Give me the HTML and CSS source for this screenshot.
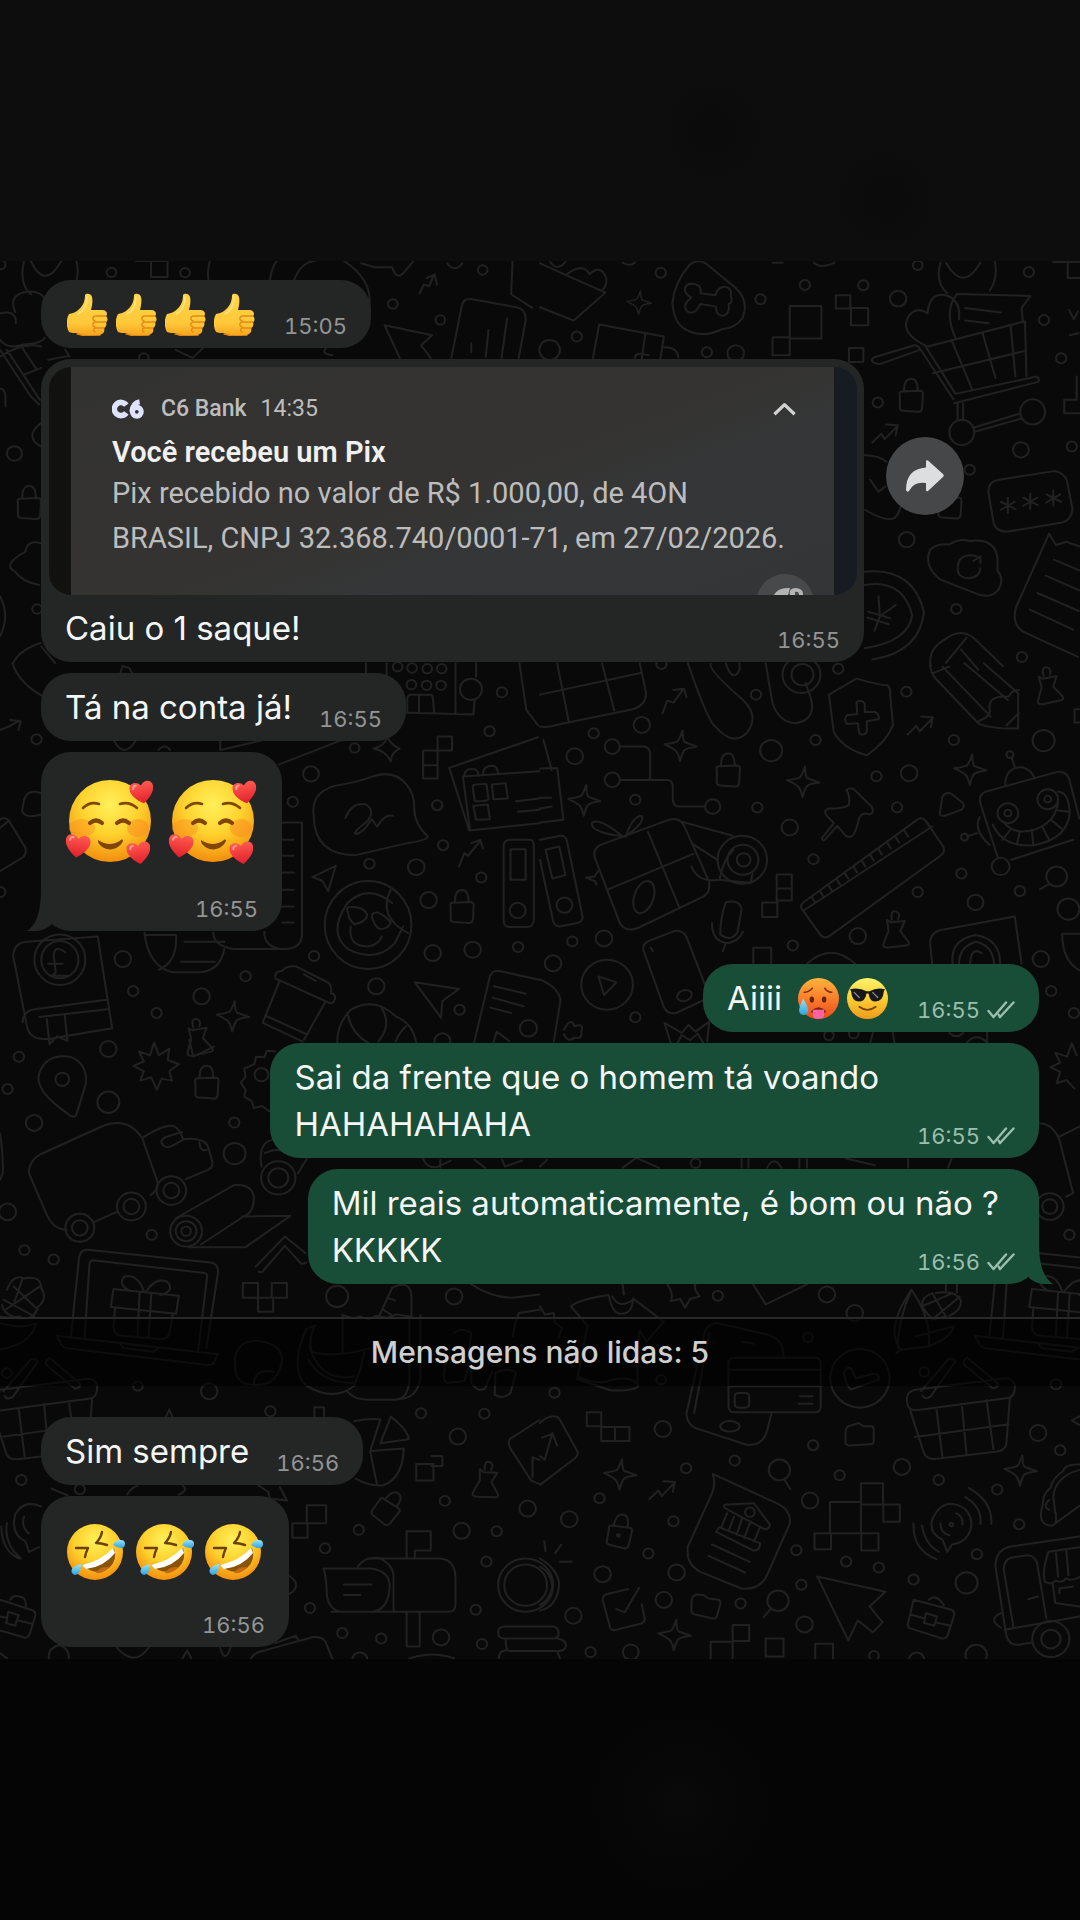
FILE: index.html
```html
<!DOCTYPE html>
<html lang="pt-BR">
<head>
<meta charset="utf-8">
<meta name="viewport" content="width=device-width, initial-scale=1">
<title>Conversa</title>
<link rel="stylesheet" href="styles.css">
</head>
<body>

<!-- Shared emoji and icon symbols -->
<svg class="defs" aria-hidden="true">
  <defs>
    <radialGradient id="face" cx=".5" cy=".3" r=".72">
      <stop offset="0" stop-color="#fff05a"/><stop offset=".5" stop-color="#ffd22e"/><stop offset="1" stop-color="#f28a0c"/>
    </radialGradient>
    <linearGradient id="hot" x1="0" y1="0" x2="0" y2="1">
      <stop offset="0" stop-color="#ffb43c"/><stop offset=".5" stop-color="#fa7e2c"/><stop offset="1" stop-color="#ea4a1c"/>
    </linearGradient>
    <linearGradient id="cool" x1="0" y1="0" x2="0" y2="1">
      <stop offset="0" stop-color="#fdf26c"/><stop offset=".5" stop-color="#fccf35"/><stop offset="1" stop-color="#f09a1a"/>
    </linearGradient>
    <linearGradient id="hand" x1="0" y1="0" x2="0" y2="1">
      <stop offset="0" stop-color="#ffd54a"/><stop offset=".7" stop-color="#ffc83a"/><stop offset="1" stop-color="#f5a31c"/>
    </linearGradient>
    <linearGradient id="heartfill" x1="0" y1="0" x2="0" y2="1">
      <stop offset="0" stop-color="#ff5a50"/><stop offset="1" stop-color="#e0202c"/>
    </linearGradient>
    <linearGradient id="tear" x1="0" y1="0" x2="0" y2="1">
      <stop offset="0" stop-color="#9be4fb"/><stop offset="1" stop-color="#2fa3dc"/>
    </linearGradient>

    <symbol id="thumb" viewBox="0 0 41 43">
      <path fill="url(#hand)" d="M18 2c1-2 6-2 7 2 1 4 0 9-1 13h11c5 0 6 4 4 6 2 2 2 5 0 6 1 3 0 5-2 6 1 3 0 6-4 7-6 1-13 1-18 0-2 0-3-1-5-2-3 0-6 0-8-1-3-5-3-13 0-18 3-1 5-1 8-3 5-4 8-8 8-16z"/>
      <path fill="none" stroke="#e28a14" stroke-width="1.4" stroke-linecap="round" d="M28 23c-3 1-3 4 0 5M28 29c-3 1-3 4 0 5M28 35c-2 1-2 3 0 4M29 23h10M29 29h10M29 35h8M10 41c3 0 6 2 9 2h14"/>
      <path fill="none" stroke="#ffe587" stroke-width="1.5" stroke-linecap="round" d="M20 4c0 8-3 14-9 17"/>
    </symbol>

    <symbol id="heart" viewBox="0 0 24 24">
      <path fill="url(#heartfill)" d="M12 23C6 19 0 13 0 7c0-6 8-8 12-2 4-6 12-4 12 2 0 6-6 12-12 16z"/>
      <path fill="none" stroke="#ff9a90" stroke-width="2" stroke-linecap="round" d="M4 7c0-2 1-3 3-3"/>
    </symbol>

    <symbol id="love" viewBox="0 0 90 85">
      <circle cx="45" cy="42" r="41" fill="url(#face)"/>
      <ellipse cx="17" cy="49" rx="13" ry="9" fill="#f98a1e" opacity=".4"/>
      <ellipse cx="73" cy="49" rx="11" ry="9" fill="#f98a1e" opacity=".5"/>
      <g fill="none" stroke="#814506" stroke-linecap="round">
        <path stroke-width="2.6" d="M18 29q7-7 16-4M55 25q9-3 17 4"/>
        <path stroke-width="4.2" d="M25 44q6-5 12 0M52 44q6-5 12 0"/>
      </g>
      <path fill="#814506" d="M33 61q12 8 23 0c1-1 2 0 2 1-5 11-20 11-25 1 0-1 0-2 0-2z"/>
      <use href="#heart" x="0" y="54" width="25" height="26" transform="rotate(8 12 67)"/>
      <use href="#heart" x="62" y="62" width="24" height="24" transform="rotate(-8 74 74)"/>
      <use href="#heart" x="65" y="1" width="24" height="25" transform="rotate(-10 77 13)"/>
    </symbol>

    <symbol id="hotface" viewBox="0 0 40 40">
      <circle cx="20" cy="20" r="20" fill="url(#hot)"/>
      <g fill="none" stroke="#7d2c08" stroke-width="1.5" stroke-linecap="round"><path d="M6 14q4 0 8-4M26 10q3 4 7 4"/></g>
      <ellipse cx="13.500" cy="21" rx="2.200" ry="3" fill="#67240a"/>
      <ellipse cx="25.500" cy="21" rx="2.200" ry="3" fill="#67240a"/>
      <path fill="#7d2410" d="M13 32q7-7 14 0v2H13z"/>
      <path fill="#ff62a4" d="M14.500 31h11v5q0 4-5.500 4t-5.500-4z"/>
      <path fill="url(#tear)" d="M5 20q5 9 5 11a4.500 4.500 0 0 1-9 1q0-3 4-12z"/>
    </symbol>

    <symbol id="coolface" viewBox="0 0 40 40">
      <circle cx="20" cy="20" r="20" fill="url(#cool)"/>
      <path fill="#17181a" d="M3 11q9-2 16 2h3q7-4 15-2l-1 2q-1 10-8 10-6 0-7-8h-2q-1 8-8 8-6 0-7-10z"/>
      <path fill="none" stroke="#8b8d92" stroke-width="1.200" stroke-linecap="round" d="M7 14l5 5M25 14l5 5"/>
      <path fill="none" stroke="#7a4208" stroke-width="1.700" stroke-linecap="round" d="M12 28q8 6 16 0"/>
    </symbol>

    <symbol id="rofl" viewBox="0 0 58 57">
      <circle cx="28" cy="29" r="28" fill="url(#face)"/>
      <g fill="none" stroke="#6e4004" stroke-width="2.400" stroke-linecap="round" stroke-linejoin="round">
        <path d="M9 25l12 0q-2 4-3 9M35 9q-1 6-6 11 5 0 11 2"/>
      </g>
      <path fill="#8a5408" d="M15 42q20-3 32-17 4 12-5 20-13 9-27-3z"/>
      <path fill="#fff" d="M15 42q19-4 31-17l2 5Q37 44 19 46z"/>
      <path fill="#c46a16" d="M29 50q4-7 13-6-5 7-13 6z"/>
      <path fill="url(#tear)" d="M46 22q3-6 8-5a3.800 3.800 0 0 1 0 8q-4 0-8-3z"/>
      <path fill="url(#tear)" d="M14 41q0 11-6 11a4 4 0 0 1-3-6q3-4 9-5z"/>
    </symbol>

    <symbol id="ticks" viewBox="0 0 28 18">
      <path fill="none" stroke="currentColor" stroke-width="2.400" stroke-linecap="round" stroke-linejoin="round" d="M1.500 10l5 6L19 1.500M13 16L26.500 1.500"/>
      <path fill="none" stroke="currentColor" stroke-width="2.400" stroke-linecap="round" d="M11.500 13.500l1.500 2.500"/>
    </symbol>

    <!-- Small wallpaper ornaments, centred on 0,0 -->
    <g id="star"><path d="M-4-44q6 32 12 34 12 2 36 8-30 8-36 18-4 12-6 32-10-26-18-30-10-6-34-14 28-8 36-14 6-10 10-34z" transform="rotate(8)"/></g>
    <g id="lock"><path d="M-32-12q-4-10 6-11l52-2q10 0 9 10l-2 42q-2 12-12 11l-44-3q-10-2-9-12zM-20-24q0-36 20-37t20 35"/></g>
    <g id="trend"><path d="M-44 28l26-26 10 16L26-18M-4-26l34 2-6 30"/></g>
    <g id="pin"><path d="M-36-24l8 32-10 38q-4 16 16 12l52-12q10-4 0-14L6 6l10-32-40 8zM-22-26q-8-28 8-26t10 22"/></g>
    <g id="book"><path d="M-136-120q4-40 40-42l206-16 42 276-186 32q-56 4-62-40zM-108 80q0-36 40-40l204-28M-60 64l204-24M-38 70l8 76 22-24 30 14-8-80"/><ellipse cy="-108" rx="74" ry="76"/><ellipse cy="-108" rx="54" ry="56"/><path d="M16-130q-30-24-34 8l6 52q-6 10-16 10h52M-34-96h42"/></g>
    <g id="laptop"><path d="M-190 90L-166-150q4-24 26-22L214-134q26 4 24 28l-34 230M-150 92l14-220q0-14 16-12L200-102q8 4 6 12l-26 222M-232 86l470 56-12 24q-4 10-20 8L-200 124q-16-4-20-16zM-46 112l10 12 86 10 14-10"/><path d="M-66-54l190 20-8 54-190-20zM-62 6l-4 54q2 24 24 26l112 10q26 0 28-24l8-50M10-46L4 84M44-42l-8 132M22-48q-18-52-56-44-22 24 18 44M28-46q30-46 62-30 24 28-20 40"/></g>
    <g id="basket"><path d="M-150-40q-8-36 24-42l262-34q30 2 26 34-2 24-24 26l-262 36q-24 0-26-20zM-142-20l40 128q8 20 32 18l182-22q24-4 26-26l10-136M-66-28l18 150M8-40l14 152M80-50l20 146M-128 60l272-38M-110-78l80-96q14-4 20 6l-72 106q-18 12-24-2M24-178l88 76q4 14-14 16L16-156q-8-12 8-22"/></g>
    <g id="cart"><path d="M-170-10l116-36q14 0 16 14l-114 42q-24 2-26-14zM-40-40L60 116M-22-44L66 100l236-52q10 6 4 16L62 128M-14-42L268-118l4 164M0 38l264-66M54-62l60 148M144-84l38 136M226-106l14 154M72 130v52M88 128v52M118 202l132-42M122 214l136-40"/><ellipse cx="84" cy="216" rx="36" ry="38"/><ellipse cx="290" cy="154" rx="36" ry="38"/><path d="M-20-44q-80-40-50-90 24-30 54-8 8-70 60-52 38 16 32 70M66-68q-36-80 4-132l214 6-26 36 4 44M94-158l104 14M94-120l68 8"/></g>
  </defs>
</svg>

<div class="backdrop backdrop--top"></div>

<main class="chat">
  <svg class="wallpaper" viewBox="0 0 1080 1398" preserveAspectRatio="xMidYMin slice" aria-hidden="true">
    <!-- top left -->
    <g transform="translate(0 -11) scale(.344 .333)">
      <path d="M70 33q-16 70 20 100M222 33q8 30 0 60M90 33q40 90 88 0M395 33h92v48h-48V33M610 33q-8 30-4 56M805 33q-16 20-20 56M855 90q20-54 60-57M1000 33q90 60 72 150M44 186q-20-50 30-60 40-6 56 20M0 190q40-10 46 20v10M0 270q20 30 70 14 50-4 60-20M1050 40l40 12h50q14 40 34 16l26-32M1300 40q20 30 44 0M1490 33l-4 100 60 40M1220 130l12-26 16 4 14-34M1240 84l24-10 6 30M1118 226l138 30-32 30 28 38M1118 226l44 98M1312 324l30-154q4-26 30-22l130 24q28 6 26 40l-20 112M1370 280v26M1420 240l-8 80M1474 206l-16 118M0 300l90 140 24 24M20 300l96 150M0 320q70-46 120-30M60 286l46 72M70 374l50-20M140 330l60-12M190 300l12 20M510 300l50 24 30-30M0 416q16 0 16 30v24M118 520q-48 40 0 70M118 880q-40-10-44 26-70 40-30 60 20 30 70 40M0 1040q30 60 0 120M118 1180q-60 20-80 60M160 1240l-40-50M950 292q-20 20 16 24"/>
      <circle cx="324" cy="67" r="14"/><circle cx="538" cy="68" r="14"/><circle cx="1403" cy="60" r="14"/><circle cx="1142" cy="162" r="14"/><circle cx="1280" cy="210" r="14"/><circle cx="42" cy="611" r="22"/><circle cx="418" cy="324" r="14"/><circle cx="2" cy="44" r="14"/><circle cx="108" cy="1078" r="14"/>
      <use href="#lock" x="84" y="770"/>
    </g>
    <!-- top right -->
    <g transform="translate(540 -11) scale(.344 .333)">
      <path d="M0 40l190 88-92 84L0 172M30 36q20 30 44 0M74 76q50-40 70-4 34-30 48 12 4 20-10 36M240 38q20 12 36 0M154 324l18-100 188 36-10 66M306 252l-10 74M276 324q0-20 40-8M360 292q40 0 42 30"/>
      <path d="M385 160q4-60 50-116 26-20 52 0l82 70q40 40 20 90-20 30-60 34-60 30-110-2-30-20-34-76z"/>
      <path d="M440 142q-24-12-18-30 14-20 40-4 8 12 4 22l44 6q6-26 28-26 22 6 16 26 8 24-6 26 6 30-16 36-22-2-20-28l-46-8q-12 30-32 26-22-14-4-36z"/>
      <path d="M676 38h30M796 38q20 20 60 0M726 168h92v98h-92zM676 262h50v54h-50zM860 136h42v40h-42zM904 174h50v52h-50zM898 294h42v42h-42zM1164 38q-16 60 20 92M1322 33q10 50-14 88M1180 38q50 90 100 0M1534 40v44h34M1492 36h76M1538 180l14 28 12-24M1540 256l26-6M1560 380v70h-36v40h44"/>
      <use href="#star" x="290" y="156" transform="translate(70 38) scale(.76)"/>
      <circle cx="351" cy="68" r="15"/><circle cx="770" cy="105" r="15"/><circle cx="940" cy="106" r="15"/><circle cx="641" cy="148" r="15"/><circle cx="1041" cy="146" r="24"/><circle cx="107" cy="260" r="15"/><circle cx="28" cy="300" r="30"/><circle cx="485" cy="307" r="15"/><circle cx="569" cy="310" r="24"/><circle cx="1098" cy="46" r="14"/><circle cx="1421" cy="66" r="15"/><circle cx="1465" cy="210" r="15"/><circle cx="1515" cy="325" r="15"/><circle cx="982" cy="458" r="15"/><circle cx="1398" cy="600" r="23"/><circle cx="1546" cy="590" r="15"/><circle cx="1249" cy="660" r="15"/><circle cx="1066" cy="870" r="23"/><circle cx="1210" cy="1078" r="15"/><circle cx="1401" cy="1222" r="15"/>
      <use href="#cart" x="1142" y="332"/>
      <use href="#lock" x="1078" y="448"/>
      <use href="#lock" x="1190" y="768"/>
      <use href="#trend" x="1010" y="550"/>
      <path d="M944 616q40 0 64 20M960 690l24 36 20-16M944 780q60 36 84 26 14-8 20-36"/>
      <path d="M1304 730q-4-34 30-40l160-26q30 4 38 30l16 84q-4 34-30 40l-160 28q-34 0-40-30zM1360 744v46M1340 756l42 22M1340 780l40-24M1425 732v46M1405 744l42 22M1405 768l40-24M1492 722v46M1472 734l42 22M1472 758l40-24"/>
      <path d="M1190 884q30-20 60-10 70-10 80 50v40q20 20 4 54-20 30-60 16l-110-44q-50-40-30-90 20-20 56-16zM1270 920q-30-10-50 10-20 54 28 56 30-4 32-30M1260 934l20-14v20"/>
      <path d="M1480 852l20 34 30-10 38 14M1480 852l-96 220q-14 50 20 74l160 76M1494 930l74 32M1470 978l98 44M1446 1030l120 54M1424 1080l126 60"/>
      <path d="M944 966q140-14 172 120-10 120-150 144M944 1006q110-20 138 90-10 80-138 100M984 1040l4 60 46-34M988 1100l-16 44M954 1086l64 20M952 1104l62 20"/>
      <path d="M1136 1250q-10-50 40-80 50-40 90 0l80 80M1180 1240l60-76M1224 1200l50 60"/>
    </g>
    <!-- middle left -->
    <g transform="translate(0 399) scale(.344 .333)">
      <path d="M36 10q20 60 90 100M350 40l6-22 20 6 8 16M1064 10v30M1124 10v60M1324 10v150M1384 10v40M1380 120l-4 44-210-6M1184 156v-44q4-8 10-8h56q8 0 8 8l4 44M1218 106v50M640 240v30M640 270l120-28M810 314l200-80M330 240q30 60 66 0M460 270q20-20 34 0M0 210q30-10 56-28M30 180l30 4-6 26M1510 10l20 140 34 46"/>
      <g><circle cx="1156" cy="20" r="14"/><circle cx="1198" cy="24" r="14"/><circle cx="1242" cy="26" r="14"/><circle cx="1284" cy="26" r="14"/><circle cx="1196" cy="74" r="14"/><circle cx="1240" cy="76" r="14"/><circle cx="1282" cy="76" r="14"/><circle cx="1369" cy="88" r="32"/></g>
      <path d="M120 400q-40-14-50 20l-6 34q10 24 56 10M0 480q10-10 24 0l50 84q4 20-10 30L0 634M0 504l24-20"/>
      <path d="M1272 230h42v42h-42v84h-42v-84h42M1230 316h42M1272 230v42"/>
      <path d="M1564 232L1306 324l58 188 204-22M1346 352l20 156M1346 350l222-16M1350 348q0-24 30-20 10 4 12 20M1404 344q0-28 30-26 12 4 14 20M1374 380q0-6 10-6l30-2 6 46q-6 8-40 6zM1430 374l40-4 6 46-42 2zM1376 438l42-4 6 44-40 2zM1500 424l68-8M1506 456l62-6"/>
      <path d="M912 470q-10-70 60-92 60-10 100-24 70-30 110 20 24 30 22 70 0 50 40 86-4 12-60 20l-150 36q-120 0-122-116zM1004 474q20-50 60-40 30 20 0 54-40 30-30 34 20 0 46-44l16 22q24-40 46-32"/>
      <path d="M820 488h58v340q-4 40-50 40H680q-60-10-60-50M820 540h34M820 588h34M820 638h34M820 690h34M820 740h34M820 788h34M768 816q0 40 40 50M420 818q10 100 80 120h80q60-4 72-70M420 826h92q4 80-50 104M536 846h116M526 906h98M290 816"/>
      <path d="M976 618l-68 34 28 10 18 32zM1334 620l16-40 10 8 36-44M1370 550l26-10 8 26"/>
      <ellipse cx="1070" cy="796" rx="126" ry="132"/><path d="M1140 730q-70-60-130 0-60 90 4 140 80 40 134-20l24-50M1136 690q-40 80 50 130M1012 760q-10-22 14-18 30 0 40 20 6 20-34 32-18-12-20-34zM1084 780q-10-22 14-22 22 10 38 30-8 20-30 20-14-4-22-28zM1020 800q-10 60 50 60 30-4 40-30"/>
      <path d="M1464 560q0-20 20-20h56q12 0 12 20v220q-2 22-20 22h-50q-18 0-18-22zM1484 568h44v92h-44z"/><circle cx="1505" cy="752" r="23"/>
      <use href="#lock" x="1342" y="752"/>
      <use href="#book" x="174" y="1008"/>
      <path d="M800 950q0-16 20-16 10-16 40-14l96 50q10 10 6 30 14 4 12 16-4 18-16 14L800 956M812 966l-48 122M944 1030l-60 110M764 1090l116 56M776 1070l116 54M884 944l34 20"/>
      <path d="M980 1150q0-60 40-100 70-40 130 20 50 20 60 80M1010 1060q10 60 60 90M1110 1046q30 50-10 100M1180 1100q-20 20-30 46M1206 968l128 20-48 36-4 50zM1378 1150l44-190q4-30 30-26l116 26M1436 980l92 22M1432 1014l90 26M1426 1044l60 16M1434 1150l10-34 36 28"/>
      <use href="#star" x="680" y="1068"/><use href="#pin" x="584" y="1130"/>
      <path d="M1086 266q30-6 40-34 12 24 36 34-24 10-26 38-14-30-50-38z"/>
      <g><circle cx="1459" cy="97" r="15"/><circle cx="1423" cy="214" r="15"/><circle cx="1031" cy="264" r="14"/><circle cx="904" cy="342" r="23"/><circle cx="106" cy="238" r="15"/><circle cx="851" cy="426" r="15"/><circle cx="1271" cy="436" r="15"/><circle cx="1288" cy="556" r="15"/><circle cx="1074" cy="612" r="15"/><circle cx="1210" cy="622" r="24"/><circle cx="1399" cy="653" r="15"/><circle cx="1246" cy="721" r="24"/><circle cx="913" cy="889" r="15"/><circle cx="1258" cy="880" r="24"/><circle cx="1374" cy="870" r="24"/><circle cx="1506" cy="862" r="15"/><circle cx="357" cy="898" r="24"/><circle cx="714" cy="950" r="15"/><circle cx="387" cy="994" r="15"/><circle cx="586" cy="1010" r="24"/><circle cx="455" cy="1060" r="15"/><circle cx="1094" cy="980" r="24"/><circle cx="1336" cy="1050" r="15"/><circle cx="1536" cy="1106" r="25"/><circle cx="1286" cy="1144" r="23"/><circle cx="1" cy="697" r="15"/></g>
    </g>
    <!-- middle right -->
    <g transform="translate(540 399) scale(.344 .333)">
      <path d="M0 200q20 4 60-8l210-44q40-14 38-50L290 10M0 104l296-66M50 10l34 176M180 10l36 142M10 240l24 90M0 326l50-2 18 156-68 8M0 414h32M0 446l34-6M356 160l14-38 18 6 28-40M388 90l30-4 8 26"/>
      <path d="M430 10q60 180 80 190 50 60 90 20 40-50-10-100-100-90-94-108M540 10q20 60 40 20V10M656 10l20 120q20 60 70 60 60-14 40-80l-14-40"/><circle cx="760" cy="44" r="55"/><circle cx="763" cy="44" r="32"/>
      <path d="M840 104l80-48q70 20 90 20 10 10 8 30l8 90q-20 50-76 90-70-20-96-70zM920 126q14-8 24 4v26h30q14 8 10 22l-34 6v32q-10 14-22 4l-4-30-32 2q-10-14 0-26l30-4z"/>
      <use href="#trend" x="1112" y="196"/>
      <path d="M1134 10q0 30 20 50l120 130q30 16 116 16V100L1290 10M1140 40l50-20M1170 20l140 150M1234 10l126 110M1274 184q30-10 34-30-10-50 54-44 10-20 30-20M1356 196l36-36"/>
      <use href="#pin" x="1486" y="74"/><path d="M1568 148h-14v40h14"/>
      <path d="M232 260h70q18 4 18 20v78M232 360h140q14 4 14 20v40q2 20 18 20h74"/><circle cx="210" cy="260" r="22"/><circle cx="210" cy="360" r="22"/><circle cx="502" cy="440" r="22"/>
      <use href="#lock" x="546" y="342"/><use href="#star" x="412" y="256"/><use href="#star" x="768" y="364"/><use href="#star" x="1254" y="328"/><use href="#star" x="132" y="420"/>
      <path d="M890 390q20-10 30 6l44 44q10 20-6 24-20-10-30 10-12 50-20 54-14 10-24-6l-20-24-34 40q-10 10-10-4l34-44-20-22q-12-16 4-22 50 0 60-12 4-30-8-44z"/>
      <path d="M1162 460l8-50q10-16 26-8l34 28q6 12-6 20l-42 16q-20 6-20-6z"/>
      <path d="M1280 430q-6-24 14-34l210-60q24-4 34 20l30 120M1280 430l50 160M1370 600l180-60M1352 380q0-60 50-58 30 10 36 34M1380 320l-8-24M1278 472q-20 40 30 84M1270 520l-28 10"/>
      <circle cx="1366" cy="284" r="10"/><circle cx="1234" cy="532" r="10"/><circle cx="1339" cy="620" r="26"/><circle cx="1360" cy="460" r="30"/><circle cx="1476" cy="418" r="30"/><circle cx="1360" cy="460" r="10"/><circle cx="1476" cy="418" r="10"/>
      <path d="M1316 494q30 70 120 62 100-20 104-100-4-60-34-60M1346 484q30 44 90 26 60-20 70-80M1344 540l22-28M1386 554l8-36M1434 556l-4-42M1480 540l-18-36M1516 506l-28-24M1538 456l-32-4"/>
      <path d="M158 590q-2-24 16-34l200-76q30-10 44 16l74 170q4 30-16 44l-190 94q-36 16-54-14zM314 516l92 230M200 688l246-106M240 530q-70-60-90-40 0 30 100 40M250 528q20-60 46-60 10 20-46 60M414 486l146 42M440 550l76 50M440 620q20 50 80 40"/>
      <ellipse cx="302" cy="712" rx="28" ry="50" transform="rotate(18 302 712)"/><circle cx="588" cy="600" r="72"/><circle cx="590" cy="600" r="45"/><circle cx="592" cy="600" r="20"/><path d="M522 660q10-60 40-90M522 660l90 10 6-30M172 630l-14 20-24 4 26 10 4 10"/>
      <path d="M0 540l60-12q14 0 18 14l46 230q0 14-16 18l-50 10q-16 0-20-16L0 600M16 570l40-10 18 86-38 10z"/><circle cx="71" cy="736" r="23"/>
      <path d="M1096 480q14-12 26 4l50 76q8 16-8 28L840 830q-16 8-26-6l-54-78q-4-12 8-20zM770 750l370-250M790 712l10 16M814 694l10 16M838 676l10 16M862 658l10 16M886 640l10 16M912 622l10 16M936 604l10 16M960 586l10 16M984 568l10 16M1010 550l10 16M1034 532l10 16M1060 514l10 16"/>
      <path d="M688 644h44v78h-44zM688 686h44M646 728h44v44h-44zM540 728q40-10 46 20l-12 70q-20 30-50 6 0-50 16-96zM500 790q0 60 50 60 30-8 40-34M540 850l-8 24M620 910v-46h52v46M776 912q70-66 140 0"/>
      <path d="M300 870q-2-20 20-28l70-28q24-6 36 18l60 160q4 24-20 34l-70 34q-24 6-36-18zM322 864l6 10"/><ellipse cx="420" cy="1008" rx="22" ry="16" transform="rotate(-20 420 1008)"/><circle cx="195" cy="975" r="75"/><path d="M170 950l52 18-36 38z"/>
      <use href="#pin" x="1042" y="808" transform="rotate(6 1042 808)"/>
      <path d="M1140 912l-6-60q0-36 36-42l210-40 20 142M1200 912q-10-70 66-86 70 10 72 86M1218 912q0-50 48-66 50 10 54 66M1284 880q-30-20-34 30M1568 822h-50q0 80 50 110"/><circle cx="1502" cy="650" r="30"/><path d="M1480 672l-26 16"/>
      <path d="M0 960q50 20 60 60l-20 126M70 1110q20-40 30-10 30-10 20 14 4 26-20 20-20 16-30-10M380 1150l-18-60 50 30 20-24 20 20 40-30-6 60M400 1150l12-24 24 16 22-20 16 26M960 1150l8-32M1030 1150l-4-32M1190 1120q20 20 40 0M1240 1150q30-34 60 0v-34"/>
      <g><circle cx="353" cy="12" r="15"/><circle cx="867" cy="26" r="15"/><circle cx="628" cy="104" r="15"/><circle cx="1065" cy="95" r="15"/><circle cx="296" cy="195" r="24"/><circle cx="156" cy="220" r="15"/><circle cx="101" cy="289" r="24"/><circle cx="672" cy="272" r="32"/><circle cx="801" cy="240" r="15"/><circle cx="1203" cy="240" r="15"/><circle cx="1464" cy="242" r="32"/><circle cx="978" cy="349" r="15"/><circle cx="1073" cy="340" r="24"/><circle cx="277" cy="420" r="15"/><circle cx="632" cy="443" r="15"/><circle cx="1038" cy="442" r="15"/><circle cx="726" cy="503" r="24"/><circle cx="795" cy="598" r="15"/><circle cx="1225" cy="641" r="15"/><circle cx="1098" cy="697" r="15"/><circle cx="1395" cy="694" r="15"/><circle cx="1266" cy="728" r="23"/><circle cx="1536" cy="748" r="32"/><circle cx="924" cy="829" r="24"/><circle cx="735" cy="857" r="15"/><circle cx="94" cy="845" r="15"/><circle cx="186" cy="836" r="24"/><circle cx="38" cy="911" r="24"/><circle cx="1456" cy="898" r="24"/><circle cx="1486" cy="994" r="15"/><circle cx="277" cy="1073" r="15"/><circle cx="840" cy="1128" r="14"/><circle cx="912" cy="1122" r="14"/><circle cx="1552" cy="1060" r="15"/></g>
    </g>
    <!-- lower left -->
    <g transform="translate(0 779) scale(.344 .333)">
      <path d="M114 100q20-60 90-50 50 20 46 80l-28 94q-10 14-24-2-100-70-84-122z"/><circle cx="181" cy="118" r="20"/>
      <path d="M448 8l14 38 30-20-4 34 32 12-28 22 8 28-30-6-14 34-16-38-32 10 10-28-30-16 30-14-14-30 32 12zM550 0l12 50 60-30M800 34l-24-2-8 20-24-2-4 22-30 14 4 24-14 18 14 22-4 20 22 14 6 20 24-6 20 16 24-8"/><circle cx="760" cy="104" r="20"/>
      <use href="#lock" x="600" y="138"/>
      <path d="M84 400q0-40 40-60l180-84q70-24 110 40l44 130q4 24-20 40M84 400l50 120q20 50 60 50M274 546l66-30M414 294q60-40 90-36 20 10 28 40 60-6 72 20l14 50q0 16-14 22l-64 28M530 276l-50 16q-16 10-8 20 8 14 24 8l36-20M580 306q0 30 20 24M0 280q10 60 8 120l-8 20"/>
      <circle cx="232" cy="564" r="42"/><circle cx="232" cy="564" r="23"/><circle cx="382" cy="500" r="42"/><circle cx="382" cy="500" r="23"/><circle cx="498" cy="452" r="43"/><circle cx="498" cy="452" r="23"/><circle cx="541" cy="574" r="46"/><circle cx="541" cy="574" r="30"/><circle cx="541" cy="574" r="14"/>
      <path d="M510 536l170-100q50-6 58 34 0 50-30 60l-124 84M704 530l140-2-130 94H550M744 680l84-90 60 50M752 696q10 4 14-4l62-74 48 54q10 0 14-4M790 300q-40 10-30 80M770 340q40-20 60 0M896 350l-30 50"/><circle cx="809" cy="414" r="50"/><circle cx="809" cy="414" r="29"/>
      <use href="#laptop" x="396" y="802"/>
      <path d="M0 850q60 20 104 0-10 60-104 80M0 830q20 6 60 0M20 750q20-50 50-34 50-10 50 30 20 30-10 56-10 40-50 34-50-10-54-40M10 780l90 50M40 740l70 70M16 810l100-70M66 716l-24 70M706 730h44v44h-44zM790 730h44v44h-44zM750 774h44v42h-44zM686 1000q-16-90 50-96 80 0 84 56-10 80-80 76-50-4-54-36zM738 1036q0-50 56-40M916 856q-20 40-10 80 60 20 170-10M916 856l-26 12M890 868q-50 120 0 170 80 50 140 0 20-50 30-100M900 920q30 110 130 90M896 960q40 70 130 70"/>
      <path d="M996 826v112M996 826l30 10 20-6 24 10 24-12 30 6 30-10 44 8M1190 830v190q-4 60-40 60h-80q-40 0-60-24M1222 826v190q-10 60-60 62M1100 834l40-90q60-30 56 40v50M1130 776l18 6M1114 810l22 14M1370 734q60 40 120 40 40-6 78-10M1568 810l-60 10-10 30-8 40M1320 880q20-20 50 0l-10 70M1300 960q-20 60 0 70l50-6 16-60M1370 980v50q20 30 40 16l20-50M1440 1000q40-20 60 0l-16 60q-20 20-46 6z"/>
      <g><circle cx="315" cy="27" r="24"/><circle cx="55" cy="50" r="15"/><circle cx="22" cy="147" r="15"/><circle cx="315" cy="187" r="32"/><circle cx="99" cy="249" r="24"/><circle cx="681" cy="248" r="15"/><circle cx="682" cy="341" r="32"/><circle cx="22" cy="516" r="25"/><circle cx="441" cy="585" r="15"/><circle cx="71" cy="631" r="15"/><circle cx="156" cy="659" r="15"/><circle cx="980" cy="770" r="32"/><circle cx="1320" cy="770" r="24"/><circle cx="20" cy="1000" r="14"/></g>
      <path d="M1230 356q10 30 40 26l40-20M1280 384v-24M1380 360l30 24M1460 360l8 20 50-18"/>
    </g>
    <!-- lower right -->
    <g transform="translate(540 779) scale(.344 .333)">
      <path d="M1546 10l14 36M1546 10l-14 40-34-12 14 30-28 14 28 14-10 34 28-10 24 26M1450 250q40 0 60 50l40 160-20 10M1510 290l58-30M0 380l20-20M240 384l40-30 66 30M586 384v-26M606 384v-26M660 384q20-40 42 0M754 384v-26M776 384v-26M890 356l84 20M1070 384v-26M1186 384l10-26"/>
      <circle cx="1482" cy="500" r="40"/><circle cx="1482" cy="500" r="22"/><circle cx="1539" cy="585" r="15"/><circle cx="452" cy="370" r="14"/>
      <use href="#laptop" x="1496" y="802"/>
      <path d="M90 800q20-20 110-34 10 60 40 56 30-4 30-46l90 70-50 60-20-34q-10 60-6 170-20 14-80 10l-96-34 30-160zM110 1010q60 30 100 10 50-10 70 10M210 770q20 40 60 10M240 734l4 30M370 734q20 30 10 50l28-6 14 26 14-26 28-8q-20-26-12-36M620 734l36 60 120-60M1080 750q60 90 50 170l-80 10q-50-60 30-180zM1080 750q-40 90-40 176M1130 920q70-30 72-60l-110 30M1046 930l-10 10M1110 800q0-30 30-40l40 70-40 10zM1150 760q60-10 74 24 0 30-34 44M1110 800l90-40M1140 840l80-70M1180 734v24M1212 734v24"/>
      <path d="M426 1120l50-230q8-40 40-40l150 36q44 14 42 70M448 1120l44-240M426 1120q0 40 40 50l130 44q50 10 64-40l14-56M588 906l32 6"/><rect x="548" y="954" width="268" height="164" rx="16"/><path d="M548 990h268M548 1040h268M756 1070h36M752 1092h40"/><rect x="566" y="1060" width="42" height="44" rx="10"/><ellipse cx="552" cy="1160" rx="28" ry="16"/>
      <ellipse cx="930" cy="1016" rx="86" ry="88"/><path d="M884 1000q6-20 20-14l14 30 50-14q20 0 16 18l-80 30q-16-14-20-50z"/>
      <use href="#basket" x="1218" y="1132"/>
      <path d="M136 1118h42v42h-42zM178 1162h82v42h-82zM218 1162v42M888 1180q0-20 16-22l22-8 14 10h22q8 0 8 10v36q0 8-10 8l-58 4q-14 0-14-10zM0 1150q20-20 40-20 14 0 20 14l50 94q0 16-16 24L0 1336M0 1250l14 10 22-80M6 1194l30-12 14 36"/>
      <g><circle cx="517" cy="768" r="15"/><circle cx="834" cy="764" r="24"/><circle cx="915" cy="820" r="24"/><circle cx="779" cy="893" r="14"/><circle cx="352" cy="1020" r="14"/><circle cx="1117" cy="997" r="14"/><circle cx="42" cy="1059" r="15"/><circle cx="1500" cy="1034" r="15"/><circle cx="357" cy="1168" r="24"/><circle cx="794" cy="1217" r="15"/><circle cx="1448" cy="1180" r="24"/><circle cx="1512" cy="1232" r="15"/></g>
      <path d="M0 800l14 24 26-4 4 30 20 14-10 30M1568 1130l-22 12 22 14"/>
    </g>
    <!-- bottom left -->
    <g transform="translate(0 1119) scale(.344 .333)">
      <use href="#basket" x="120" y="112"/>
      <path d="M482 112l10-24 10 24M914 108V82h28v26M1030 124q40-10 76-6l-30 96q60-6 98-8-4 90-60 110-40 4-80-20M1076 214l20 100M1136 110q50 40 52 68l-82 12zM1210 252h50v50h-50zM1254 228h32v30h-32M1568 120l-84 56q-10 10 0 30l60 96 24 10M1568 240l-20-8v60"/>
      <use href="#pin" x="1424" y="300" transform="rotate(14 1424 300)"/><use href="#lock" x="1122" y="390" transform="rotate(35 1122 390)"/>
      <path d="M370 344q10-20 30-26M520 344q30-14 10-28M750 316l30 20 4 20 50 6-20-40M120 380q-50-24-76 24-14 60 30 80l10 32 30-14M20 430q-10 60 40 106M4 440q0 70 50 96M150 326l46 20M70 410q-10 30 14 50M892 376h56v54h-56zM850 430h44v44h-44z"/>
      <path d="M940 566h140q60 10 52 64-6 60-50 66H990q-40-10-40-60-2-50-10-70zM1040 560q20-30 60-26 46 20 44 60v102M1070 536h210q44 4 44 60v80q0 20-20 20H964M1182 534v-80h70v58h-46v22M1182 700v100h38V700M1000 614h80M1000 646h48"/>
      <circle cx="1528" cy="616" r="80"/><circle cx="1528" cy="616" r="62"/><path d="M1568 740h-100q-20 0-20 18t20 18h100M1470 780q0 30 10 34h88M1450 836q0-24 20-24"/>
      <path d="M0 660l90 30q16 4 12 20l-16 54q-6 14-20 8L0 752M30 660q10-20 40-4 8 10 4 26M0 710l20 4M54 722l40 10M24 696l30 10-10 32-26-8zM142 836q-4-30 30-40 30 10 28 40M340 804q50 60 92 0M530 836l14-24 12 24M640 804q14 50 30 0M730 836q10-20 40-24l140-40q34-4 40 24l16 40M800 790l60-22 8 14M836 586q50 30 0 60M1190 836q70-24 130 0M0 820l20 16"/>
      <g><circle cx="401" cy="18" r="14"/><circle cx="608" cy="34" r="24"/><circle cx="786" cy="94" r="15"/><circle cx="1224" cy="100" r="15"/><circle cx="1408" cy="101" r="15"/><circle cx="1331" cy="170" r="24"/><circle cx="62" cy="300" r="15"/><circle cx="232" cy="328" r="15"/><circle cx="1293" cy="363" r="15"/><circle cx="1534" cy="386" r="24"/><circle cx="1043" cy="450" r="15"/><circle cx="1342" cy="453" r="24"/><circle cx="1444" cy="454" r="15"/><circle cx="945" cy="505" r="15"/><circle cx="1414" cy="545" r="15"/><circle cx="901" cy="685" r="15"/><circle cx="1383" cy="690" r="15"/><circle cx="995" cy="760" r="15"/><circle cx="1108" cy="776" r="15"/><circle cx="1282" cy="773" r="24"/><circle cx="1401" cy="793" r="15"/><circle cx="1046" cy="840" r="22"/></g>
    </g>
    <!-- bottom right -->
    <g transform="translate(540 1119) scale(.344 .333)">
      <use href="#star" x="236" y="282"/><use href="#star" x="1400" y="270"/><use href="#star" x="394" y="764"/>
      <use href="#trend" x="362" y="330"/><use href="#lock" x="230" y="464" transform="rotate(10 230 464)"/><circle cx="228" cy="467" r="4"/>
      <path d="M12 484l4 30M44 520l18-26M58 546h34M0 536q50 30 56 76-6 70-56 80M0 560q34 20 36 60-6 40-36 56M0 740h40q14 4 14 20t-14 16H0M50 776q24 4 26 20-2 16-20 18H0M50 814l8 22M182 660q0-16 16-18l58-14M182 660l22 84q4 10 18 6l70-18q14-4 12-18l-8-40M222 688l24 10 42-74"/>
      <path d="M502 282l190 90q40 20 34 60l-66 154q-20 46-74 40l-120-50q-44-24-36-76l70-160q12-30 2-58zM536 384q-4-10 6-10l80-4 46 64q0 14-16 14zM544 400l-16 40M564 410l-16 44M588 414l-16 50M612 424l-18 50M640 440l-18 46M520 442l120 48q0 24-20 22l-108-56zM500 494l110 52M490 528l106 50"/><circle cx="610" cy="397" r="14"/>
      <path d="M843 366h90v94h-90zM933 310h64v64h-64zM998 374h48v52h-48zM798 460h48v48h-48zM934 460h50v52h-50zM440 670q0-20 14-26l22 2 14 10 30 4q6 4 4 14l-10 36q-4 8-12 6l-52-12q-12-4-10-14z"/>
      <circle cx="696" cy="270" r="31"/><path d="M710 298l18 30"/><circle cx="692" cy="663" r="31"/><path d="M672 686l-22 26"/>
      <path d="M1170 480q-40-20-30-60 20-50 60-48 54 10 54 64-6 50-56 58l-14 22zM1164 430q0 30 26 36M1210 400q20 10 18 34M1086 430q-4 80 66 108M1110 436q10 60 50 80M1246 324q70 40 66 108M1236 352q50 30 44 80"/><circle cx="1196" cy="434" r="5"/>
      <path d="M1568 254q-40-4-48 20-30 20-36 50-24 20-22 50-20 60 26 64l80-60M1568 270q-70 20-76 80l6 50M1480 360q-20 20 0 30M1500 400v30"/>
      <path d="M1568 470l-200 30q-44 10-44 60l32 210q10 30 40 24l34-6M1376 740l-28-170q0-36 30-38l40-6q24 2 28 30l26 160M1350 750l218-40M1568 502l-90 14q-20 60-10 90 20 10 30-4 20 10 30-6 20 10 40-4M1500 520l6 70M1530 510l6 76M1490 610l8 60 70 10M1510 640v-14l40-6M1420 658l28-8M1340 700q-40 20 0 44"/><circle cx="1485" cy="778" r="54"/><circle cx="1485" cy="778" r="28"/>
      <path d="M806 590l198 46-46 44 38 48-28 30-44-36-28 60zM1086 660l110 30q10 4 8 16l-20 64q-6 8-16 6l-92-30q-10-4-6-16zM1130 660q20-20 44 16M1076 704l42 12M1152 728l42 10M1122 700l32 10-8 28-30-8zM496 836v-50h64v50M560 736h48v48h-48zM656 776h52v54h-52zM800 836v-44h52v44"/>
      <g><circle cx="425" cy="265" r="15"/><circle cx="566" cy="242" r="15"/><circle cx="871" cy="286" r="15"/><circle cx="1052" cy="261" r="24"/><circle cx="1159" cy="300" r="15"/><circle cx="1329" cy="329" r="15"/><circle cx="173" cy="355" r="15"/><circle cx="785" cy="362" r="24"/><circle cx="85" cy="418" r="24"/><circle cx="388" cy="424" r="15"/><circle cx="1393" cy="433" r="15"/><circle cx="745" cy="511" r="15"/><circle cx="315" cy="521" r="15"/><circle cx="1270" cy="523" r="15"/><circle cx="890" cy="545" r="15"/><circle cx="985" cy="563" r="15"/><circle cx="182" cy="583" r="24"/><circle cx="397" cy="578" r="24"/><circle cx="1086" cy="599" r="15"/><circle cx="1240" cy="609" r="32"/><circle cx="760" cy="615" r="15"/><circle cx="360" cy="660" r="24"/><circle cx="583" cy="671" r="15"/><circle cx="97" cy="708" r="24"/><circle cx="769" cy="734" r="24"/><circle cx="147" cy="817" r="15"/><circle cx="264" cy="817" r="23"/><circle cx="971" cy="828" r="14"/><circle cx="1095" cy="840" r="22"/><circle cx="1268" cy="826" r="31"/></g>
    </g>
  </svg>

  <div class="thread">
    <article class="bubble bubble--in">
      <span class="emoji-run" role="img" aria-label="Quatro polegares para cima">
        <svg class="emoji"><use href="#thumb"/></svg><svg class="emoji"><use href="#thumb"/></svg><svg class="emoji"><use href="#thumb"/></svg><svg class="emoji"><use href="#thumb"/></svg>
      </span>
      <time class="stamp">15:05</time>
    </article>

    <div class="media-row">
      <article class="bubble bubble--in bubble--media">
        <div class="shot">
          <div class="notice">
            <div class="notice__head">
              <svg class="notice__logo" viewBox="2 0 29 18" role="img" aria-label="C6">
                <g fill="none" stroke="#dfe3ff" stroke-width="5"><path d="M15 5.500A6 6 0 1 0 15 12.500"/><circle cx="24.500" cy="11.500" r="4" stroke-width="4.600"/><path stroke-width="4.600" d="M27 2.500q-6 1-7 9"/></g>
              </svg>
              <span class="notice__app">C6 Bank</span>
              <span class="notice__time">14:35</span>
              <svg class="notice__chevron" viewBox="0 0 24 14" aria-hidden="true"><path fill="none" stroke="#d2d2d2" stroke-width="3.400" stroke-linejoin="round" d="M1.500 12.500L12 2.500l10.500 10"/></svg>
            </div>
            <h2 class="notice__title">Você recebeu um Pix</h2>
            <p class="notice__body">Pix recebido no valor de R$ 1.000,00, de 4ON BRASIL, CNPJ 32.368.740/0001-71, em 27/02/2026.</p>
            <svg class="notice__knob" viewBox="0 0 58 22" aria-hidden="true">
              <circle cx="29" cy="30" r="29" fill="#48494a"/>
              <path fill="#b4b4b4" d="M18 22q4-8 16-7l-2 7zM34 22q-2-7 6-7 8 1 7 7h-4q0-4-4-3v3z"/>
            </svg>
          </div>
        </div>
        <div class="caption">
          <p class="text">Caiu o 1 saque!</p>
          <time class="stamp">16:55</time>
        </div>
      </article>
      <button class="share" type="button" aria-label="Encaminhar">
        <svg viewBox="0 0 38 32" aria-hidden="true"><path fill="#dddedf" d="M20 1.500q0-2 2-1l15 13.500q1.500 1.500 0 3L22 31q-2 1-2-1v-7Q8 21 3 31q-2 2-3-1Q0 9 20 7.500z"/></svg>
      </button>
    </div>

    <article class="bubble bubble--in">
      <p class="text">Tá na conta já!</p>
      <time class="stamp">16:55</time>
    </article>

    <article class="bubble bubble--in bubble--stacked">
      <svg class="tail tail--in" viewBox="0 0 34 42" aria-hidden="true"><path fill="currentColor" d="M14 0C14 24 9 36 0 42q14 2 24-6L34 0z"/></svg>
      <span class="emoji-run emoji-run--large" role="img" aria-label="Dois rostos sorridentes com corações">
        <svg class="emoji"><use href="#love"/></svg><svg class="emoji"><use href="#love"/></svg>
      </span>
      <time class="stamp">16:55</time>
    </article>

    <article class="bubble bubble--out bubble--first">
      <p class="text text--inline">Aiiii
        <span class="emoji-run" role="img" aria-label="Rosto com calor e rosto com óculos escuros">
          <svg class="emoji"><use href="#hotface"/></svg><svg class="emoji"><use href="#coolface"/></svg>
        </span>
      </p>
      <span class="stamp"><time>16:55</time><svg class="ticks" role="img" aria-label="Entregue"><use href="#ticks"/></svg></span>
    </article>

    <article class="bubble bubble--out bubble--wide">
      <p class="text">Sai da frente que o homem tá voando<br>HAHAHAHAHA</p>
      <span class="stamp"><time>16:55</time><svg class="ticks" role="img" aria-label="Entregue"><use href="#ticks"/></svg></span>
    </article>

    <article class="bubble bubble--out bubble--overlap">
      <svg class="tail tail--out" viewBox="0 0 34 42" aria-hidden="true"><path fill="currentColor" d="M14 0C14 24 9 36 0 42q14 2 24-6L34 0z"/></svg>
      <p class="text">Mil reais automaticamente, é bom ou não ?<br>KKKKK</p>
      <span class="stamp"><time>16:56</time><svg class="ticks" role="img" aria-label="Entregue"><use href="#ticks"/></svg></span>
    </article>

    <div class="unread">Mensagens não lidas: 5</div>

    <article class="bubble bubble--in">
      <p class="text">Sim sempre</p>
      <time class="stamp">16:56</time>
    </article>

    <article class="bubble bubble--in bubble--stacked">
      <span class="emoji-run emoji-run--medium" role="img" aria-label="Três rostos rolando de rir">
        <svg class="emoji"><use href="#rofl"/></svg><svg class="emoji"><use href="#rofl"/></svg><svg class="emoji"><use href="#rofl"/></svg>
      </span>
      <time class="stamp">16:56</time>
    </article>
  </div>
</main>

<div class="backdrop backdrop--bottom"></div>
</body>
</html>
```
FILE: styles.css
```css
:root {
  --bubble-in: #242626;
  --bubble-out: #184d38;
  --gutter: 41px;
}

* {
  box-sizing: border-box;
}

body {
  display: flex;
  flex-direction: column;
  min-height: 100vh;
  margin: 0;
  background: #050505;
  color: #f5f6f6;
  font-family: Inter, "Noto Sans", sans-serif;
}

p,
h2 {
  margin: 0;
}

.defs {
  position: absolute;
  width: 0;
  height: 0;
}

/* Plain strips above and below the conversation */
.backdrop--top {
  height: 261px;
  background:
    radial-gradient(circle at 66% 50%, #0a0a0a 0, transparent 50px),
    radial-gradient(circle at 82% 76%, #0a0a0a 0, transparent 50px),
    #0d0d0d;
}

.backdrop--bottom {
  flex: 1;
  background:
    radial-gradient(circle at 63% 55%, #090909 0, transparent 90px),
    #050505;
}

.chat {
  position: relative;
  overflow: hidden;
  background: #090909;
}

.wallpaper {
  position: absolute;
  inset: 0;
  width: 100%;
  height: 100%;
  fill: none;
  stroke: #212121;
  stroke-width: 6;
  stroke-linecap: round;
  stroke-linejoin: round;
}

.thread {
  position: relative;
  display: flex;
  flex-direction: column;
  align-items: flex-start;
  gap: 11px;
  padding: 19px var(--gutter) 12px;
}

/* Bubbles */
.bubble {
  position: relative;
  display: flex;
  align-items: flex-end;
  gap: 27px;
  padding: 11px 24px 10px;
  border-radius: 30px;
}

.bubble--in {
  background: var(--bubble-in);
}

.bubble--out {
  align-self: flex-end;
  background: var(--bubble-out);
}

.bubble--first {
  margin-top: 22px;
}

.bubble--wide {
  gap: 38px;
}

.bubble--overlap {
  display: grid;
}

.bubble--overlap > .text,
.bubble--overlap > .stamp {
  grid-area: 1 / 1;
}

.bubble--overlap > .text {
  padding-right: 16px;
}

.bubble--overlap > .stamp {
  place-self: end;
}

.bubble--stacked {
  flex-direction: column;
  gap: 33px;
  padding-top: 27px;
}

.bubble--media {
  flex: 0 1 823px;
  flex-direction: column;
  align-items: stretch;
  gap: 10px;
  padding: 8px 7px 10px 8px;
}

.text {
  font-size: 33px;
  line-height: 47px;
}

.text--inline {
  display: flex;
  align-items: center;
  gap: 14px;
}

.stamp {
  display: flex;
  align-items: center;
  gap: 7px;
  color: #939595;
  font-size: 22px;
  font-variant-numeric: tabular-nums;
  line-height: 24px;
}

.bubble--out .stamp {
  color: #9abfae;
}

.ticks {
  width: 28px;
  height: 18px;
}

.tail {
  position: absolute;
  bottom: 0;
  width: 34px;
  height: 42px;
}

.tail--in {
  left: -14px;
  color: var(--bubble-in);
}

.tail--out {
  right: -14px;
  color: var(--bubble-out);
  transform: scaleX(-1);
}

/* Emoji */
.emoji-run {
  display: flex;
  align-items: center;
  gap: 8px;
  min-height: 47px;
  padding: 0 2px;
}

.emoji {
  width: 41px;
  height: 43px;
}

.emoji-run--large {
  gap: 13px;
  padding: 0;
}

.emoji-run--large .emoji {
  width: 90px;
  height: 85px;
}

.emoji-run--medium {
  gap: 11px;
}

.emoji-run--medium .emoji {
  width: 58px;
  height: 57px;
}

/* Forwarded screenshot */
.media-row {
  display: flex;
  align-items: flex-start;
  gap: 22px;
  width: 100%;
}

.shot {
  height: 228px;
  padding: 0 23px 0 22px;
  overflow: hidden;
  border-radius: 22px;
  background: linear-gradient(90deg, #11110f, #131414 5%, #171b22 95%, #171c22);
}

.notice {
  position: relative;
  height: 100%;
  padding: 28px 38px 0 41px;
  background: linear-gradient(160deg, #323231, #343331 50%, #353637 65%, #343536);
  color: #bdbdbd;
  font-family: Roboto, sans-serif;
}

.notice__head {
  display: flex;
  align-items: center;
  font-size: 23px;
  line-height: 28px;
}

.notice__logo {
  width: 32px;
  height: 20px;
  margin-right: 17px;
}

.notice__app {
  margin-right: 14px;
  font-weight: 500;
}

.notice__chevron {
  width: 23px;
  height: 14px;
  margin-left: auto;
}

.notice__title {
  padding-top: 10px;
  color: #f0f0f0;
  font-size: 29px;
  font-weight: 600;
  line-height: 38px;
}

.notice__body {
  font-size: 29px;
  line-height: 45px;
}

.notice__knob {
  position: absolute;
  right: 20px;
  bottom: 0;
  width: 58px;
  height: 22px;
}

.caption {
  display: flex;
  align-items: flex-end;
  justify-content: space-between;
  padding: 0 17px 0 16px;
}

.share {
  display: grid;
  flex: none;
  place-items: center;
  width: 78px;
  height: 78px;
  margin: 78px 0 0;
  padding: 0;
  border: 0;
  border-radius: 50%;
  background: #464748;
}

.share svg {
  width: 38px;
  height: 32px;
}

/* Unread divider */
.unread {
  align-self: stretch;
  margin: 22px calc(-1 * var(--gutter)) 20px;
  padding: 14px 0;
  border-top: 2px solid #292929;
  background: rgb(0 0 0 / 60%);
  color: #cfcfcf;
  font-size: 30px;
  font-weight: 500;
  line-height: 39px;
  text-align: center;
}
```
